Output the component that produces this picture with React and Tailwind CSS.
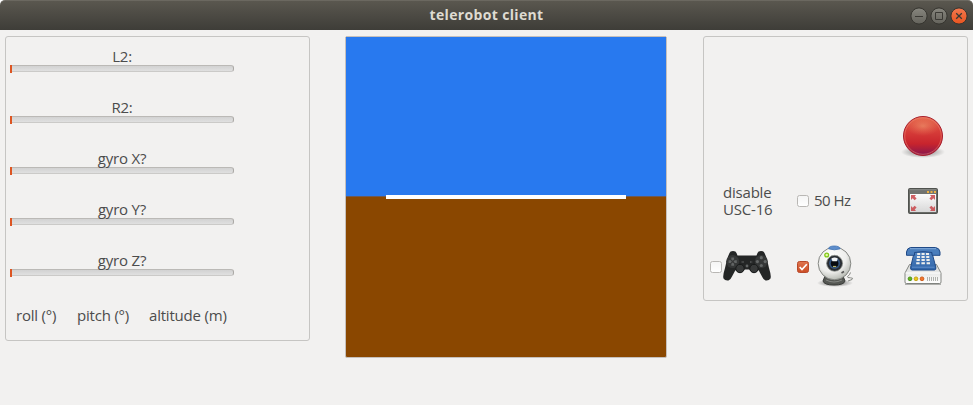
const FONT = 'font-["Open_Sans","Noto_Sans",sans-serif]';

const meters = ["L2:", "R2:", "gyro X?", "gyro Y?", "gyro Z?"];

function Meter({ label }) {
  return (
    <div className="h-[51px] w-[224px]">
      <div className="relative z-10 h-[17px] text-center leading-[17px] whitespace-nowrap">{label}</div>
      <div className="flex h-2 w-[224px] items-start">
        <div className="h-2 w-0.5 bg-[#dd5522]" />
        <div className="h-[7px] flex-1 rounded-r-[3px] border border-l-0 border-[#cbcac8] border-t-[#bbb9b6] border-r-[#aaa8a5] bg-gradient-to-b from-[#d2d2d2] to-[#e0e0e0]" />
      </div>
    </div>
  );
}

function WindowButton({ kind }) {
  const close = kind === "close";
  return (
    <svg width="18" height="18" viewBox="0 0 18 18">
      <defs>
        <linearGradient id={`wb-${kind}`} x1="0" y1="0" x2="0" y2="1">
          <stop offset="0" stopColor={close ? "#f4794f" : "#87867e"} />
          <stop offset="1" stopColor={close ? "#e9541f" : "#64635c"} />
        </linearGradient>
      </defs>
      <circle cx="9" cy="9" r="8.1" fill={`url(#wb-${kind})`} stroke="#35342f" strokeWidth="1" />
      {kind === "min" && <path d="M5 9.5H13" stroke="#3a3934" />}
      {kind === "max" && <path d="M5.5 5.5H12.5V12.5H5.5Z" fill="none" stroke="#3a3934" />}
      {close && <path d="M6.2 6.2L11.8 11.8M11.8 6.2L6.2 11.8" stroke="#3a3934" strokeWidth="1.3" />}
    </svg>
  );
}

function Checkbox({ checked }) {
  return (
    <svg width="12" height="12" viewBox="0 0 12 12" className="shrink-0">
      <defs>
        <linearGradient id="cb-on" x1="0" y1="0" x2="0" y2="1">
          <stop offset="0" stopColor="#df754f" />
          <stop offset="1" stopColor="#cc4d24" />
        </linearGradient>
        <linearGradient id="cb-off" x1="0" y1="0" x2="0" y2="1">
          <stop offset="0" stopColor="#f4f4f4" />
          <stop offset="1" stopColor="#ffffff" />
        </linearGradient>
      </defs>
      <rect x="0.5" y="0.5" width="11" height="11" rx="2" fill={checked ? "url(#cb-on)" : "url(#cb-off)"} stroke={checked ? "#b8492a" : "#b9b7b4"} />
      {checked && <path d="M2.7 6L5 8.5L9.8 3.2" fill="none" stroke="#fff" strokeWidth="1.7" />}
    </svg>
  );
}

function RecordIcon() {
  return (
    <svg width="48" height="48" viewBox="0 0 48 48">
      <defs>
        <linearGradient id="rec" x1="0" y1="0" x2="0" y2="1">
          <stop offset="0" stopColor="#e5674c" />
          <stop offset="0.35" stopColor="#d8403a" />
          <stop offset="0.7" stopColor="#c8242d" />
          <stop offset="1" stopColor="#85164f" />
        </linearGradient>
        <radialGradient id="recGlow">
          <stop offset="0" stopColor="#f09a70" stopOpacity="0.6" />
          <stop offset="1" stopColor="#e87858" stopOpacity="0" />
        </radialGradient>
        <radialGradient id="recShade">
          <stop offset="0.5" stopColor="#000" stopOpacity="0.25" />
          <stop offset="1" stopColor="#000" stopOpacity="0" />
        </radialGradient>
      </defs>
      <ellipse cx="24" cy="40" rx="22" ry="6" fill="url(#recShade)" />
      <circle cx="24" cy="24" r="19.5" fill="url(#rec)" stroke="#a61d2c" />
      <ellipse cx="24" cy="14" rx="17" ry="10" fill="url(#recGlow)" />
      <circle cx="24" cy="24" r="18.3" fill="none" stroke="#ef8c77" strokeOpacity="0.5" />
    </svg>
  );
}

function FullscreenIcon() {
  return (
    <svg width="30" height="26" viewBox="0 0 30 26">
      <defs>
        <linearGradient id="fs" x1="0" y1="0" x2="0" y2="1">
          <stop offset="0" stopColor="#fbfbfb" />
          <stop offset="1" stopColor="#d8d8d8" />
        </linearGradient>
      </defs>
      <rect x="0.6" y="0.6" width="28.8" height="24.8" rx="1.5" fill="#71736f" stroke="#50524e" strokeWidth="1.2" />
      <path d="M1.5 1.7H28.5" stroke="#8a8c88" />
      <path d="M2 6H28V24H2Z" fill="url(#fs)" />
      <path d="M19 3H21V5H19ZM22.5 3H24.5V5H22.5ZM26 3H28V5H26Z" fill="#edb044" />
      <g fill="#c9464b" opacity="0.85">
        <path d="M3 7H8L6.7 8.4L8.6 10.4L6.6 12.2L4.7 10.2L3 12Z" />
        <path d="M27 7H22L23.3 8.4L21.4 10.4L23.4 12.2L25.3 10.2L27 12Z" />
        <path d="M3 23H8L6.7 21.6L8.6 19.6L6.6 17.8L4.7 19.8L3 18Z" />
        <path d="M27 23H22L23.3 21.6L21.4 19.6L23.4 17.8L25.3 19.8L27 18Z" />
      </g>
    </svg>
  );
}

function GamepadIcon() {
  return (
    <svg width="48" height="32" viewBox="0 0 48 32" className="shrink-0">
      <path d="M6.5 3Q7 1 10 1Q13 1 13.5 3L14.5 5.5H33.5L34.5 3Q35 1 38 1Q41 1 41.5 3L43 6.5Q44.5 11 46 18Q48.5 26 47.5 28.5Q46 31 42.5 30.5Q40.5 30 39 26.5L35.5 20Q34 22.5 31 22.5Q28 22.5 26.5 19.5H21.5Q20 22.5 17 22.5Q14 22.5 12.5 20L9 26.5Q7.5 30 5.5 30.5Q2 31 .5 28.5Q-.5 26 2 18Q3.5 11 5 6.5Z" fill="#242626" />
      <circle cx="9.7" cy="11.6" r="6.5" fill="#353737" />
      <circle cx="38.3" cy="11.6" r="6.5" fill="#353737" />
      <path d="M8.3 7.5H11.1V9.5L9.7 10.7L8.3 9.5ZM8.3 15.7H11.1V13.7L9.7 12.5L8.3 13.7ZM5.6 10.2H7.6L8.8 11.6L7.6 13H5.6ZM13.8 10.2H11.8L10.6 11.6L11.8 13H13.8Z" fill="#626565" />
      <g fill="#656868">
        <circle cx="38.3" cy="7.7" r="1.6" /><circle cx="34.4" cy="11.6" r="1.6" />
        <circle cx="42.2" cy="11.6" r="1.6" /><circle cx="38.3" cy="15.5" r="1.6" />
      </g>
      <g fill="#383a3a" stroke="#171919">
        <circle cx="17" cy="18.5" r="4.2" /><circle cx="31" cy="18.5" r="4.2" />
      </g>
      <circle cx="24" cy="16" r="1.4" fill="#626565" />
      <path d="M18.5 11.5H21V12.5H18.5ZM27 11.2L30 12L27 12.8Z" fill="#606363" />
    </svg>
  );
}

function WebcamIcon() {
  return (
    <svg width="40" height="42" viewBox="0 0 40 42">
      <defs>
        <radialGradient id="wc" cx="0.4" cy="0.3" r="0.7">
          <stop offset="0" stopColor="#ffffff" />
          <stop offset="0.65" stopColor="#eeeeec" />
          <stop offset="1" stopColor="#babdb6" />
        </radialGradient>
        <radialGradient id="wcShade">
          <stop offset="0.5" stopColor="#000" stopOpacity="0.3" />
          <stop offset="1" stopColor="#000" stopOpacity="0" />
        </radialGradient>
      </defs>
      <ellipse cx="19" cy="38" rx="18" ry="4" fill="url(#wcShade)" />
      <path d="M34.5 27.5Q34 30 31.5 31.5Q31 33 34.5 32.8Q38 33 36 34.5L32 36" fill="none" stroke="#888a85" strokeWidth="1" />
      <path d="M9 31H27L29 36Q28 40 18 40Q8 40 7 36Z" fill="#555753" stroke="#383a37" />
      <path d="M10 35Q18 39 26 35" stroke="#858783" fill="none" />
      <circle cx="18.5" cy="18.5" r="16.3" fill="url(#wc)" stroke="#858783" />
      <path d="M12.5 3.8Q13 1 18.3 1Q23.5 1 24.2 3.8Q18.3 5.8 12.5 3.8Z" fill="#5d8dcb" stroke="#3f72b4" strokeWidth=".8" />
      <circle cx="18.6" cy="18.3" r="8" fill="#292d32" stroke="#92958f" strokeWidth=".8" />
      <circle cx="18.6" cy="18.3" r="5.6" fill="#34537b" />
      <circle cx="18.6" cy="18.5" r="3.8" fill="#080b10" />
      <path d="M15.4 13.5Q18.6 11.5 21.8 13.5L20.8 16.2H16.4Z" fill="#f0f3f5" />
      <path d="M17 21.5H20.2" stroke="#bbb568" strokeWidth="1.2" />
      <circle cx="10.7" cy="10" r="1.9" fill="#e8f7ae" stroke="#80c916" strokeWidth="1.3" />
      <path d="M25.5 28L28 26.5" stroke="#555" strokeWidth="1.5" />
    </svg>
  );
}

function PhoneIcon() {
  return (
    <svg width="40" height="40" viewBox="0 0 40 40">
      <defs>
        <linearGradient id="ph" x1="0" y1="0" x2="0" y2="1">
          <stop offset="0" stopColor="#5585c0" /><stop offset="1" stopColor="#2f65aa" />
        </linearGradient>
        <linearGradient id="modem" x1="0" y1="0" x2="0" y2="1">
          <stop offset="0" stopColor="#d6d7d5" /><stop offset="1" stopColor="#fff" />
        </linearGradient>
      </defs>
      <path d="M6.5 18.5H33.5L38 27V36Q38 37.5 36.5 37.5H3.5Q2 37.5 2 36V27Z" fill="url(#modem)" stroke="#858783" />
      <path d="M2.5 27H37.5" stroke="#fff" />
      <path d="M2 38.2H38" stroke="#777975" strokeWidth=".8" />
      <path d="M11.5 5H28.5L32.8 21Q33.3 24 31.5 24H9Q7.2 24 7.7 21Z" fill="url(#ph)" stroke="#204a87" />
      <path d="M9 21.2H31.5" stroke="#6c98cf" strokeWidth=".8" />
      <path d="M7.5 1.5H32.5Q36.5 2 37 6V9.3H29V6.5Q20 4.8 11.5 6.5V9.3H3.5V6Q4 2 7.5 1.5Z" fill="#4b7ebc" stroke="#204a87" />
      <path d="M7 2.7H33" stroke="#81a9da" />
      <g fill="#eeeeec">
        <path d="M14.2 7H17.2V8.9H14.2ZM18.6 7H21.6V8.9H18.6ZM23 7H26V8.9H23Z" />
        <path d="M13.9 10H17V12H13.9ZM18.5 10H21.7V12H18.5ZM23.2 10H26.3V12H23.2Z" />
        <path d="M13.5 13.1H16.8V15.1H13.5ZM18.5 13.1H21.8V15.1H18.5ZM23.4 13.1H26.7V15.1H23.4Z" />
        <path d="M13.2 16.2H16.6V18.2H13.2ZM18.4 16.2H21.9V18.2H18.4ZM23.6 16.2H27V18.2H23.6Z" />
      </g>
      <circle cx="7" cy="32.8" r="1.9" fill="#62b51c" stroke="#3e8507" strokeWidth=".8" />
      <circle cx="13" cy="32.8" r="1.9" fill="#edc716" stroke="#ba9708" strokeWidth=".8" />
      <circle cx="19" cy="32.8" r="1.9" fill="#f3752d" stroke="#c54e08" strokeWidth=".8" />
      <path d="M24.5 31V35M26.5 31V35M28.5 31V35M30.5 31V35M32.5 31V35M34.5 31V35" stroke="#b0b2ae" />
    </svg>
  );
}

export default function App() {
  return (
    <div className={`h-[405px] w-[973px] overflow-hidden bg-white text-[15px] tracking-[-0.2px] text-[#4c4c4c] ${FONT}`}>
      <header className="grid h-[30px] grid-cols-[1fr_auto_1fr] items-center rounded-t-[5px] border-t border-[#6b6860] bg-gradient-to-b from-[#5a574f] to-[#3e3d38] pr-[5px]">
        <span />
        <h1 className="pb-0.5 pl-[5px] text-[14px] leading-5 font-bold tracking-[0.35px] whitespace-nowrap text-[#dfdbd2]">telerobot client</h1>
        <div className="flex justify-end gap-0.5">
          <WindowButton kind="min" />
          <WindowButton kind="max" />
          <WindowButton kind="close" />
        </div>
      </header>
      <main className="flex h-[375px] items-start bg-[#f2f1f0] pt-1.5 pl-[5px]">
        <section className="h-[305px] w-[305px] rounded-[3px] border border-[#c6c5c3] pt-[11px] pl-1">
          {meters.map((m) => <Meter key={m} label={m} />)}
          <div className="flex h-[22px] items-center pt-[2px] pl-1.5 whitespace-nowrap">
            <span className="w-[61px]">roll (°)</span>
            <span className="w-[72px]">pitch (°)</span>
            <span>altitude (m)</span>
          </div>
        </section>
        <section className="relative ml-[35px] h-[322px] w-[322px] rounded-[2px] border border-[#c6c0bc] bg-[#8a4700]">
          <div className="h-[159px] bg-[#2879ef]" />
          <div className="h-px bg-[#6c5a58]" />
          <div className="absolute top-[158px] left-10 h-1 w-60 bg-white" />
        </section>
        <section className="ml-9 h-[265px] w-[265px] rounded-[3px] border border-[#c6c5c3] pt-[66px]">
          <div className="flex h-[65px] items-center justify-end pr-5"><RecordIcon /></div>
          <div className="flex h-[65px] items-center">
            <div className="flex w-[93px] flex-col pl-[19px] leading-[17px] whitespace-nowrap">
              <span>disable</span>
              <span>USC-16</span>
            </div>
            <div className="flex w-[111px] items-center gap-[5px]">
              <Checkbox /><span className="tracking-[-0.5px]">50 Hz</span>
            </div>
            <FullscreenIcon />
          </div>
          <div className="flex h-[65px] items-center">
            <div className="flex w-[93px] items-center gap-px pl-1.5">
              <span className="pt-0.5"><Checkbox /></span>
              <GamepadIcon />
            </div>
            <div className="flex w-[106px] items-center gap-[7px]">
              <span className="pt-0.5"><Checkbox checked /></span>
              <WebcamIcon />
            </div>
            <PhoneIcon />
          </div>
        </section>
      </main>
    </div>
  );
}
